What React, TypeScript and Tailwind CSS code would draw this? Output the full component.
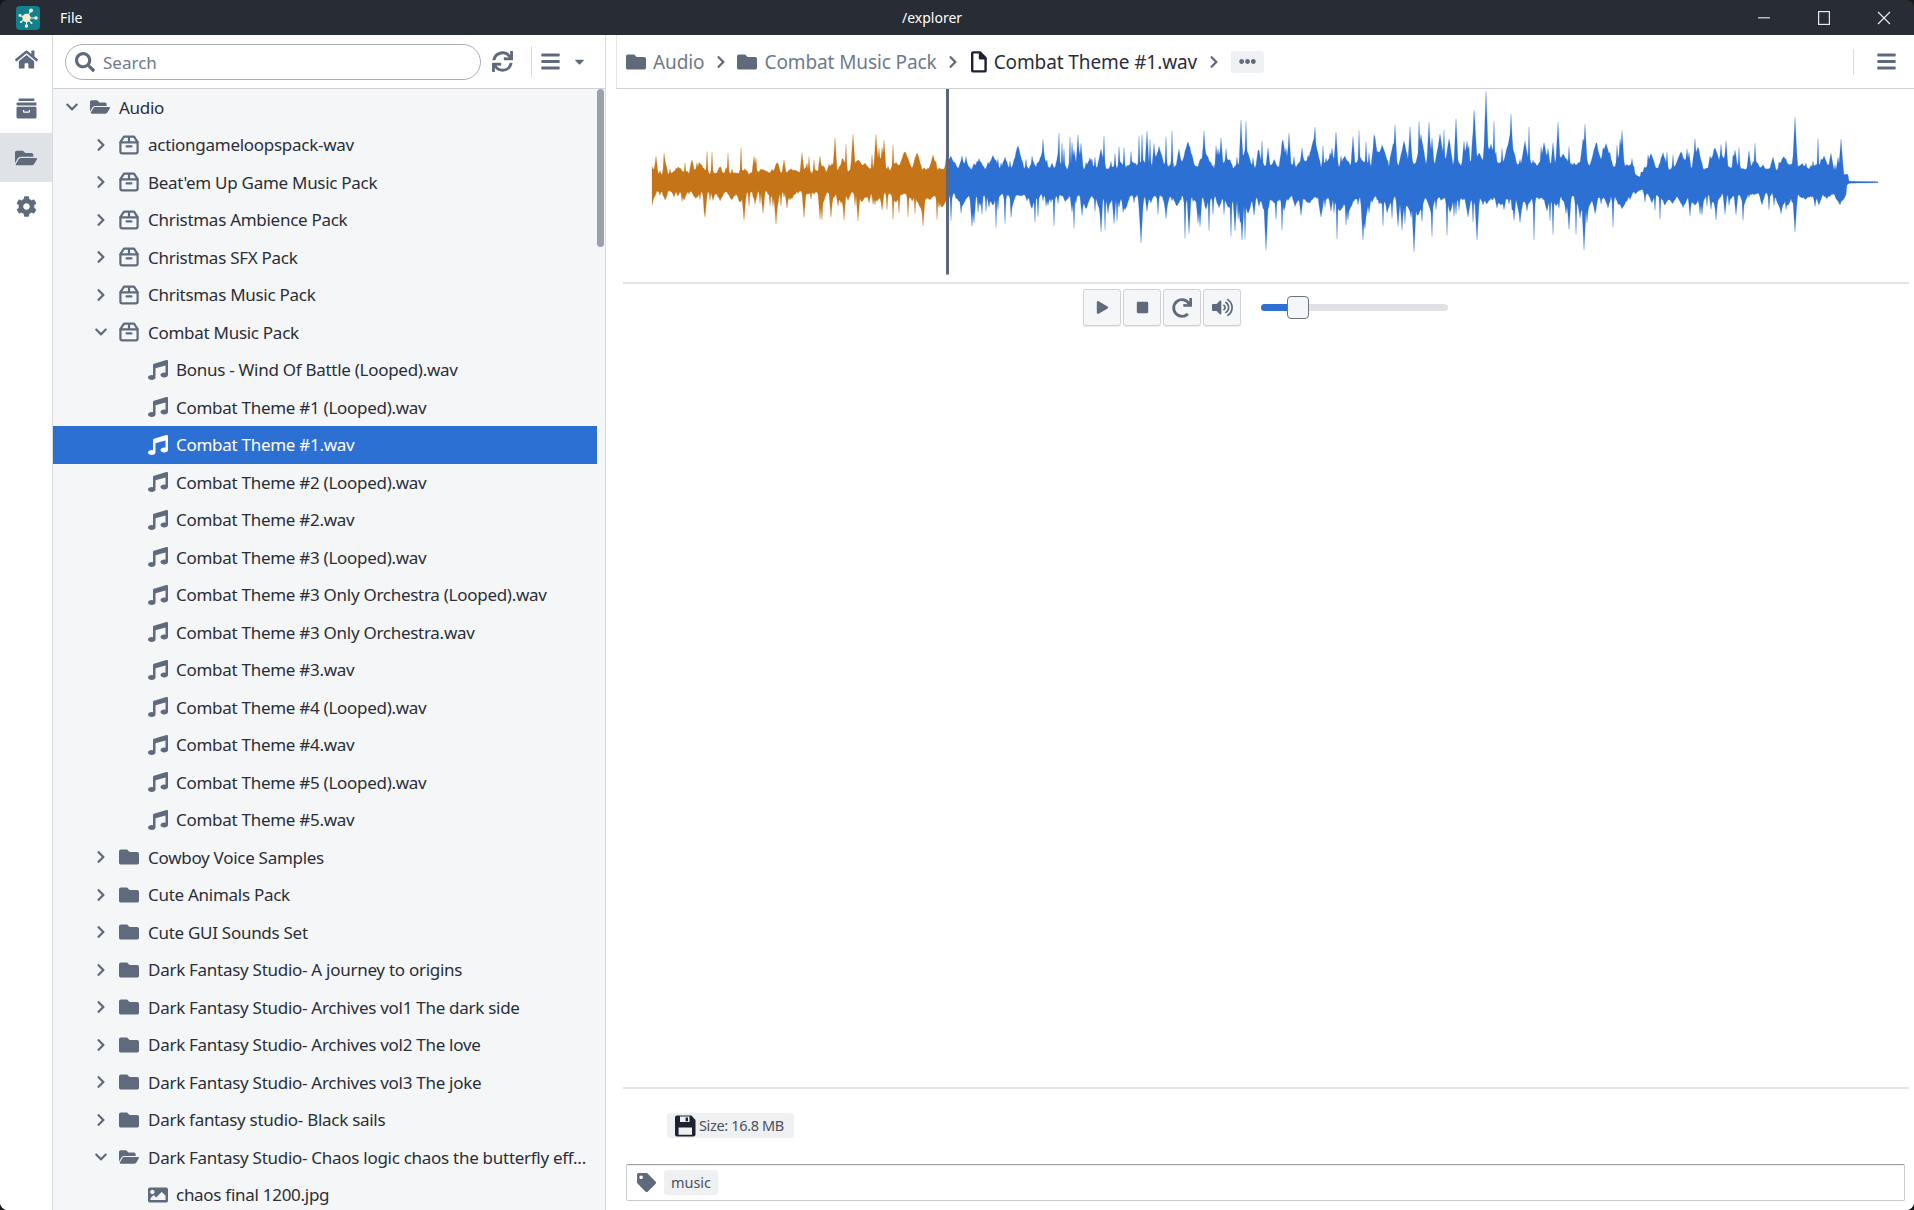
import { useMemo, type ReactNode } from 'react';
import {
  FaHome, FaFolderOpen, FaFolder, FaCog, FaSearch, FaSync, FaBars, FaCaretDown,
  FaChevronRight, FaChevronDown, FaMusic, FaImage, FaEllipsisH, FaPlay, FaStop,
  FaRedo, FaVolumeUp, FaTag,
} from 'react-icons/fa';

type Row = { label: string; level: number; kind: 'root' | 'pack' | 'folder' | 'music' | 'image'; open?: boolean; selected?: boolean };

const rows: Row[] = [
  { label: 'Audio', level: 0, kind: 'root', open: true },
  { label: 'actiongameloopspack-wav', level: 1, kind: 'pack' },
  { label: "Beat'em Up Game Music Pack", level: 1, kind: 'pack' },
  { label: 'Christmas Ambience Pack', level: 1, kind: 'pack' },
  { label: 'Christmas SFX Pack', level: 1, kind: 'pack' },
  { label: 'Chritsmas Music Pack', level: 1, kind: 'pack' },
  { label: 'Combat Music Pack', level: 1, kind: 'pack', open: true },
  { label: 'Bonus - Wind Of Battle (Looped).wav', level: 2, kind: 'music' },
  { label: 'Combat Theme #1 (Looped).wav', level: 2, kind: 'music' },
  { label: 'Combat Theme #1.wav', level: 2, kind: 'music', selected: true },
  { label: 'Combat Theme #2 (Looped).wav', level: 2, kind: 'music' },
  { label: 'Combat Theme #2.wav', level: 2, kind: 'music' },
  { label: 'Combat Theme #3 (Looped).wav', level: 2, kind: 'music' },
  { label: 'Combat Theme #3 Only Orchestra (Looped).wav', level: 2, kind: 'music' },
  { label: 'Combat Theme #3 Only Orchestra.wav', level: 2, kind: 'music' },
  { label: 'Combat Theme #3.wav', level: 2, kind: 'music' },
  { label: 'Combat Theme #4 (Looped).wav', level: 2, kind: 'music' },
  { label: 'Combat Theme #4.wav', level: 2, kind: 'music' },
  { label: 'Combat Theme #5 (Looped).wav', level: 2, kind: 'music' },
  { label: 'Combat Theme #5.wav', level: 2, kind: 'music' },
  { label: 'Cowboy Voice Samples', level: 1, kind: 'folder' },
  { label: 'Cute Animals Pack', level: 1, kind: 'folder' },
  { label: 'Cute GUI Sounds Set', level: 1, kind: 'folder' },
  { label: 'Dark Fantasy Studio- A journey to origins', level: 1, kind: 'folder' },
  { label: 'Dark Fantasy Studio- Archives vol1 The dark side', level: 1, kind: 'folder' },
  { label: 'Dark Fantasy Studio- Archives vol2 The love', level: 1, kind: 'folder' },
  { label: 'Dark Fantasy Studio- Archives vol3 The joke', level: 1, kind: 'folder' },
  { label: 'Dark fantasy studio- Black sails', level: 1, kind: 'folder' },
  { label: 'Dark Fantasy Studio- Chaos logic chaos the butterfly eff...', level: 1, kind: 'folder', open: true },
  { label: 'chaos final 1200.jpg', level: 2, kind: 'image' },
];

function PackIcon() {
  return (
    <svg width="20" height="20" viewBox="0 0 20 20" fill="none" stroke="currentColor" strokeWidth="2.2" strokeLinejoin="round" strokeLinecap="round">
      <path d="M5 1.6h10l3.6 5.6v9.4a1.8 1.8 0 0 1-1.8 1.8H3.2a1.8 1.8 0 0 1-1.8-1.8V7.2z" />
      <path d="M1.6 7.4h16.8M10 2v5.2M7.6 11.4h4.8" />
    </svg>
  );
}

function ArchiveIcon() {
  return (
    <svg width="21" height="21" viewBox="0 0 21 21" fill="currentColor">
      <rect x="2.5" y="0.5" width="16" height="2.6" rx="1" />
      <rect x="0.5" y="4.6" width="20" height="2.8" rx="1" />
      <path d="M1.6 8.8h17.8a1.1 1.1 0 0 1 1.1 1.1v9a1.6 1.6 0 0 1-1.6 1.6H2.1a1.6 1.6 0 0 1-1.6-1.6v-9a1.1 1.1 0 0 1 1.1-1.1zM7 12v1.6a1.2 1.2 0 0 0 1.2 1.2h4.6a1.2 1.2 0 0 0 1.2-1.2V12h-1.2v1.6H8.2V12z" fillRule="evenodd" />
    </svg>
  );
}

function SaveIcon() {
  return (
    <svg width="21" height="22" viewBox="0 0 21 22" fill="#1c2230" fillRule="evenodd">
      <path d="M2 .5h14.4L20.5 5v14.5a2 2 0 0 1-2 2H2a2 2 0 0 1-2-2v-17a2 2 0 0 1 2-2zM5 1.5v5.6h9.5V1.5zM10.6 2.4h2.4v3.8h-2.4zM3.6 12.4v7.3h13.4v-7.3z" />
    </svg>
  );
}

function FileIcon() {
  return (
    <svg width="16" height="22" viewBox="0 0 16 22" fill="none" stroke="#1c2230" strokeWidth="2.4" strokeLinejoin="round">
      <path d="M2.2 1.4h6.8l5.6 5.8v12.2a1 1 0 0 1-1 1H2.2a1 1 0 0 1-1-1V2.4a1 1 0 0 1 1-1z" />
      <path d="M9 1.6v5.6h5.4" fill="#1c2230" />
    </svg>
  );
}

function Logo() {
  return (
    <svg width="24" height="24" viewBox="0 0 24 24">
      <rect width="24" height="24" rx="4" fill="#12808f" />
      <g stroke="#e8f3ee" strokeWidth="1.1">
        <path d="M10.5 12 15 4.5M10.5 12 10.5 20M10.5 12 4 9.5M10.5 12 20 12M10.5 12 5 16M10.5 12 15.5 17" />
      </g>
      <circle cx="10.5" cy="12" r="4.2" fill="#f6efcf" />
      <g fill="#f6efcf">
        <circle cx="15" cy="4.5" r="2" /><circle cx="10.5" cy="20" r="1.7" /><circle cx="4" cy="9.5" r="1.4" />
        <circle cx="20" cy="12" r="1.8" /><circle cx="5" cy="16" r="1.1" /><circle cx="15.5" cy="17" r="1.1" />
      </g>
    </svg>
  );
}

function rowIcon(row: Row) {
  if (row.kind === 'root') return <FaFolderOpen size={20} />;
  if (row.kind === 'pack') return <PackIcon />;
  if (row.kind === 'folder') return row.open ? <FaFolderOpen size={20} /> : <FaFolder size={20} />;
  if (row.kind === 'music') return <FaMusic size={20} />;
  return <FaImage size={20} />;
}

function TreeRow({ row }: { row: Row }) {
  const pad = row.level === 0 ? 'pl-[11px]' : row.level === 1 ? 'pl-[40px]' : 'pl-[93px]';
  return (
    <div className={`flex h-[37.5px] shrink-0 items-center ${pad} ${row.selected ? 'bg-[#2d70d3] text-white' : 'text-[#2a2e37]'}`}>
      {row.level < 2 && (
        <span className="flex w-[16px] justify-center text-[#5f6b7c]">
          {row.open ? <FaChevronDown size={14} /> : <FaChevronRight size={14} />}
        </span>
      )}
      <span className={`flex w-[24px] justify-center ${row.level < 2 ? 'ml-[8px]' : ''} ${row.selected ? 'text-white' : 'text-[#5f6b7c]'}`}>
        {rowIcon(row)}
      </span>
      <span className={`${row.level < 2 ? 'ml-[7px]' : 'ml-[6px]'} whitespace-nowrap text-[17px] tracking-[-0.28px]`}>{row.label}</span>
    </div>
  );
}

function NavItem({ children, active }: { children: ReactNode; active?: boolean }) {
  return <div className={`flex h-[49px] items-center justify-center text-[#5f6b7c] ${active ? 'bg-[#dfe2e6]' : ''}`}>{children}</div>;
}

function Sidebar() {
  return (
    <aside className="flex w-[53px] shrink-0 flex-col border-r border-[#d8dbe0] bg-white">
      <NavItem><FaHome size={23} /></NavItem>
      <NavItem><ArchiveIcon /></NavItem>
      <NavItem active><FaFolderOpen size={22} /></NavItem>
      <NavItem><FaCog size={21} /></NavItem>
    </aside>
  );
}

function Explorer() {
  return (
    <section className="flex w-[553px] shrink-0 flex-col border-r border-[#d8dbe0] bg-[#f5f6f8]">
      <div className="flex h-[53.5px] shrink-0 items-center border-b-[1.5px] border-[#cfd1d5] bg-white pl-[12px] pt-[1px]">
        <div className="flex h-[36px] w-[416px] items-center rounded-full border border-[#a9adb3] bg-white pl-[9px] text-[#5f6b7c]">
          <FaSearch size={20} />
          <span className="ml-[8px] pt-[1px] text-[17px] text-[#6f7a8a]">Search</span>
        </div>
        <span className="ml-[11px] text-[#5f6b7c]"><FaSync size={21} /></span>
        <span className="ml-[18px] h-[32px] w-px bg-[#d8dbe0]" />
        <span className="ml-[8px] text-[#5f6b7c]"><FaBars size={21} /></span>
        <span className="ml-[11px] text-[#5f6b7c]"><FaCaretDown size={15} /></span>
      </div>
      <div className="relative flex flex-1 flex-col overflow-hidden">
        {rows.map((row) => <TreeRow key={row.label} row={row} />)}
        <div className="absolute right-0 top-0 h-full w-[8px] bg-[#f5f6f8]">
          <div className="h-[158px] w-[7px] rounded-[4px] bg-[#9aa1ab]" />
        </div>
      </div>
    </section>
  );
}

function mulberry(seed: number) {
  return () => {
    seed = (seed + 0x6d2b79f5) | 0;
    let t = Math.imul(seed ^ (seed >>> 15), 1 | seed);
    t = (t + Math.imul(t ^ (t >>> 7), 61 | t)) ^ t;
    return ((t ^ (t >>> 14)) >>> 0) / 4294967296;
  };
}

// x, base top, spike top, base bottom, spike bottom (px from the centre line)
const envelope = [
  [652, 8, 32, 9, 32], [800, 9, 38, 9, 36], [850, 11, 48, 10, 42], [947, 13, 48, 12, 46], [960, 13, 48, 12, 44],
  [1100, 14, 54, 13, 50], [1200, 15, 62, 14, 58], [1300, 16, 64, 15, 56], [1450, 18, 66, 16, 60], [1600, 17, 64, 15, 58],
  [1628, 16, 54, 14, 48], [1640, 2, 4, 2, 4], [1644, 13, 44, 11, 40], [1700, 13, 44, 11, 40], [1800, 13, 44, 12, 40],
  [1840, 11, 44, 10, 30], [1849, 1, 2, 1, 2], [1878, 0.5, 0.5, 0.5, 0.5],
];
const topPeaks = [[853, 48], [876, 48], [1486, 91], [1474, 72], [1511, 68], [1429, 60], [1795, 65], [1841, 43], [1558, 60], [1585, 58], [1622, 52]];
const bottomPeaks = [[705, 35], [744, 38], [776, 42], [923, 44], [972, 44], [1141, 61], [1242, 58], [1266, 68], [1363, 58], [1414, 70], [1477, 58], [1584, 68], [1795, 50]];

function at(x: number, col: number) {
  for (let i = 1; i < envelope.length; i++) {
    const a = envelope[i - 1];
    const b = envelope[i];
    if (x <= b[0]) return a[col] + ((b[col] - a[col]) * (x - a[0])) / (b[0] - a[0]);
  }
  return 0.5;
}

function side(col: number, peaks: number[][], seed: number, hump: number) {
  const rnd = mulberry(seed);
  const out: number[] = [];
  for (let x = 652; x <= 1878; x++) out.push(at(x, col) * (0.9 + rnd() * 0.25));
  // broad humps, then narrow spikes on top of them
  for (let x = 652; x <= 1849; x += 7 + Math.floor(rnd() * 14)) {
    const b = at(x, col);
    const h = b * (1.3 + rnd() * hump);
    const w = 2 + Math.floor(rnd() * 5);
    for (let d = -w; d <= w; d++) {
      const i = x + d - 652;
      if (i >= 0 && i < out.length) out[i] = Math.max(out[i], b + (h - b) * (1 - Math.abs(d) / (w + 1)) + rnd() * 2);
    }
  }
  for (let x = 652; x <= 1849; x += 2 + Math.floor(rnd() * 6)) {
    const b = at(x, col);
    const h = b + (at(x, col + 1) - b) * Math.pow(rnd(), 1.8);
    const w = 1 + Math.floor(rnd() * 1.6);
    for (let d = -w; d <= w; d++) {
      const i = x + d - 652;
      if (i >= 0 && i < out.length) out[i] = Math.max(out[i], h - ((h - b) * Math.abs(d)) / (w + 0.2));
    }
  }
  for (const [px, h] of peaks) {
    for (let d = -2; d <= 2; d++) out[px - 652 + d] = Math.max(out[px - 652 + d], h - Math.abs(d) * (h * 0.3));
  }
  return out;
}

function Waveform() {
  const [played, rest] = useMemo(() => {
    const cy = 181.7;
    const top = side(1, topPeaks, 7, 1.4);
    const bottom = side(3, bottomPeaks, 23, 1);
    const build = (from: number, to: number) => {
      const up: string[] = [];
      const down: string[] = [];
      for (let x = from; x <= to; x++) {
        up.push(`${x},${(cy - top[x - 652]).toFixed(1)}`);
        down.unshift(`${x},${(cy + bottom[x - 652]).toFixed(1)}`);
      }
      return `M${up.join('L')}L${down.join('L')}Z`;
    };
    return [build(652, 947), build(947, 1878)];
  }, []);
  return (
    <svg className="block h-[193.5px] w-full" viewBox="617 88.5 1297 193.5">
      <path d={played} fill="#c57417" stroke="#c57417" strokeOpacity="0.35" strokeWidth="0.6" />
      <path d={rest} fill="#2d70d3" stroke="#2d70d3" strokeOpacity="0.35" strokeWidth="0.6" />
      <rect x="946" y="88" width="3" height="186" fill="#5b667a" />
    </svg>
  );
}

function CtrlButton({ children }: { children: ReactNode }) {
  return <button className="flex h-[37px] w-[38px] items-center justify-center rounded-[3px] border border-[#cfd1d4] bg-[#f5f6f8] text-[#5f6b7c] shadow-[0_1px_1px_rgba(0,0,0,0.08)]">{children}</button>;
}

function Crumb({ label, icon, dark }: { label: string; icon: ReactNode; dark?: boolean }) {
  return (
    <span className={`flex items-center gap-[7px] text-[19px] tracking-[-0.1px] ${dark ? 'text-[#2a2e37]' : 'text-[#6f7a8a]'}`}>
      {icon}
      <span className="pt-[1px]">{label}</span>
    </span>
  );
}

function Sep() {
  return <span className="mx-[9.5px] text-[#5f6b7c]"><FaChevronRight size={14} /></span>;
}

function Detail() {
  return (
    <main className="flex min-w-0 flex-1 flex-col bg-white">
      <div className="ml-[10px] flex h-[53.5px] shrink-0 items-center border-b-[1.5px] border-l border-[#cfd1d5] border-l-[#e6e7ea] pl-[9px] pt-[1px]">
        <Crumb label="Audio" icon={<span className="text-[#5f6b7c]"><FaFolder size={20} /></span>} />
        <Sep />
        <Crumb label="Combat Music Pack" icon={<span className="text-[#5f6b7c]"><FaFolder size={20} /></span>} />
        <Sep />
        <Crumb label="Combat Theme #1.wav" dark icon={<span className="ml-[1px]"><FileIcon /></span>} />
        <Sep />
        <span className="ml-[1px] flex h-[22px] w-[33px] items-center justify-center rounded-[3px] bg-[#eff0f2] text-[#5f6b7c]"><FaEllipsisH size={17} /></span>
        <span className="ml-auto h-[26px] w-px bg-[#d8dbe0]" />
        <span className="ml-[22px] mr-[17px] text-[#5f6b7c]"><FaBars size={21} /></span>
      </div>
      <div className="ml-[11px] shrink-0">
        <Waveform />
      </div>
      <div className="ml-[17px] mr-[5px] h-[2px] shrink-0 bg-[#e2e4e7]" />
      <div className="flex h-[56px] shrink-0 items-center pb-[9px] pl-[477px]">
        <div className="flex gap-[2px]">
          <CtrlButton><FaPlay size={13} /></CtrlButton>
          <CtrlButton><FaStop size={13} /></CtrlButton>
          <CtrlButton><FaRedo size={20} /></CtrlButton>
          <CtrlButton><FaVolumeUp size={21} /></CtrlButton>
        </div>
        <div className="relative ml-[20px] h-[7px] w-[187px] rounded-full bg-[#e0e2e5]">
          <div className="h-full w-[30px] rounded-l-full bg-[#2d70d3]" />
          <div className="absolute left-[26px] top-[-8px] h-[23px] w-[22px] rounded-[4px] border border-[#6b7280] bg-[#f5f6f8]" />
        </div>
      </div>
      <div className="flex-1" />
      <div className="ml-[17px] mr-[5px] h-[2px] shrink-0 bg-[#e2e4e7]" />
      <div className="flex h-[75px] shrink-0 items-center pb-[2px] pl-[61px]">
        <span className="flex h-[25px] w-[127px] items-center rounded-[3px] bg-[#eff0f2] pl-[8px] text-[14.5px] tracking-[-0.35px] text-[#4a5160]">
          <SaveIcon />
          <span className="ml-[3px]">Size: 16.8 MB</span>
        </span>
      </div>
      <div className="mb-[9px] ml-[20px] mr-[9px] flex h-[37px] shrink-0 items-center rounded-[2px] border border-[#c9cbcf] border-t-[#9a9da3] pl-[10px] shadow-[inset_0_1px_1px_rgba(0,0,0,0.06)]">
        <span className="text-[#5f6b7c]"><FaTag size={19} /></span>
        <span className="ml-[8px] flex h-[25px] w-[54px] items-center justify-center rounded-[3px] bg-[#eff0f2] text-[14.5px] text-[#4a5160]">music</span>
      </div>
    </main>
  );
}

function TitleBar() {
  return (
    <header className="relative flex h-[35px] shrink-0 items-center bg-[#282c34] pl-[16px] text-[14px] text-white">
      <Logo />
      <span className="ml-[20px]">File</span>
      <span className="absolute left-1/2 -translate-x-[55px]">/explorer</span>
      <div className="ml-auto flex items-center text-[#e8e8e8]">
        <svg width="12" height="2" className="mr-[48px]"><rect width="12" height="1.5" fill="#b8babd" /></svg>
        <svg width="12" height="14" className="mr-[47px]" fill="none" stroke="currentColor" strokeWidth="1.2"><rect x="0.6" y="0.6" width="10.8" height="12.8" /></svg>
        <svg width="14" height="14" className="mr-[23px]" stroke="currentColor" strokeWidth="1.2"><path d="M1 1 13 13M13 1 1 13" /></svg>
      </div>
    </header>
  );
}

export default function App() {
  return (
    <div className="h-[1210px] w-[1914px] overflow-hidden bg-[#15171b] font-['Noto_Sans',sans-serif]">
      <div className="flex h-full flex-col overflow-hidden rounded-[8px]">
        <TitleBar />
        <div className="flex min-h-0 flex-1 bg-white">
          <Sidebar />
          <Explorer />
          <Detail />
        </div>
      </div>
    </div>
  );
}
